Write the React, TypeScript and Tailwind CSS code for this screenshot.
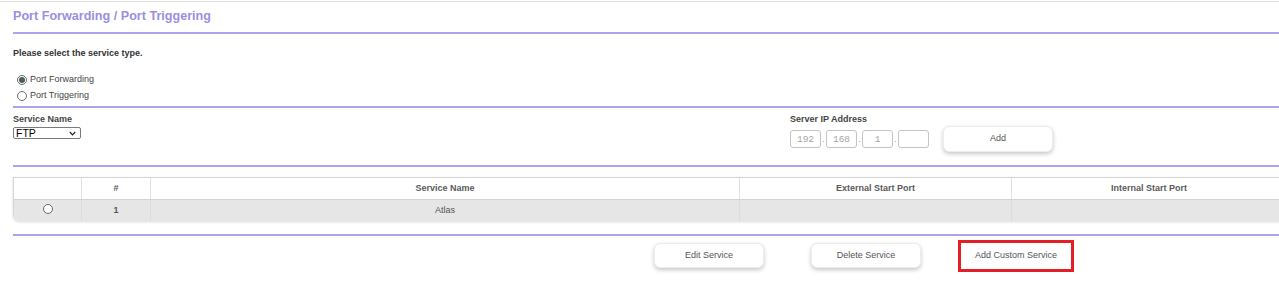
function Radio({ checked }: { checked?: boolean }) {
  return (
    <span className="w-[10px] h-[10px] rounded-full border border-[#6b6b6b] bg-white flex items-center justify-center shrink-0">
      {checked && <span className="w-[6px] h-[6px] rounded-full bg-[#4d5c5c]"></span>}
    </span>
  );
}

function IpBox({ value }: { value: string }) {
  return (
    <input
      readOnly
      value={value}
      className="w-[31px] h-[18px] rounded-[3px] border border-[#c4c4c4] bg-white text-center text-[9.5px] text-[#a5a5a5] font-['Liberation_Mono',monospace] outline-none"
    />
  );
}

function Dot() {
  return <span className="w-[5px] text-[9px] leading-[18px] text-[#999] text-center">.</span>;
}

function PillButton({ label, className = '' }: { label: string; className?: string }) {
  return (
    <button className={`w-[110px] h-[25px] rounded-[6px] bg-white border border-[#ececec] shadow-[0_2px_4px_rgba(0,0,0,0.22)] text-[9px] text-[#555] ${className}`}>
      {label}
    </button>
  );
}

export default function App() {
  return (
    <div className="w-[1279px] h-[289px] overflow-hidden bg-white font-['Liberation_Sans',Arial,sans-serif]">
      <div className="h-px mt-px bg-[#e3e3e3]"></div>
      <div className="pl-[13px]">
        <h1 className="h-[30px] pt-[6px] text-[12.6px] leading-4 font-bold text-[#9a8fe2]">
          Port Forwarding / Port Triggering
        </h1>
        <div className="h-[2px] bg-[#aca3ea]"></div>

        <p className="mt-[14px] text-[9px] leading-[11px] font-bold text-[#333]">Please select the service type.</p>

        <div className="mt-[13px] pl-[4px] text-[9px] text-[#444]">
          <label className="h-4 flex items-center gap-[3px]">
            <Radio checked />
            <span>Port Forwarding</span>
          </label>
          <label className="h-4 flex items-center gap-[3px]">
            <Radio />
            <span>Port Triggering</span>
          </label>
        </div>

        <div className="mt-[2px] h-[2px] bg-[#aca3ea]"></div>

        <div className="mt-[6px] flex">
          <div className="w-[777px]">
            <p className="text-[9px] leading-[11px] font-bold text-[#444]">Service Name</p>
            <div className="mt-[2px] w-[68px] h-[12px] border border-[#7a7a7a] rounded-[2px] flex items-center justify-between pl-[2px] pr-[4px]">
              <span className="text-[10.5px] leading-none text-black">FTP</span>
              <svg width="7" height="5" viewBox="0 0 7 5" fill="none">
                <path d="M0.8 1 L3.5 3.8 L6.2 1" stroke="#222" strokeWidth="1.2" />
              </svg>
            </div>
          </div>
          <div>
            <p className="text-[9px] leading-[11px] font-bold text-[#444]">Server IP Address</p>
            <div className="mt-px flex items-center">
              <IpBox value="192" />
              <Dot />
              <IpBox value="168" />
              <Dot />
              <IpBox value="1" />
              <Dot />
              <IpBox value="" />
              <PillButton label="Add" className="ml-[14px] h-[26px]" />
            </div>
          </div>
        </div>

        <div className="mt-[13px] h-[2px] bg-[#aca3ea]"></div>

        <div className="mt-[10px] w-[1272px] border-t border-l border-[#d6d6d6] rounded-bl-[6px] shadow-[0_1px_3px_rgba(0,0,0,0.15)] overflow-hidden">
          <div className="grid grid-cols-[68px_69px_589px_272px_274px] h-[21px] text-[9px] font-bold text-[#5a5a5a] bg-white">
            <div className="border-r border-[#e0e0e0]"></div>
            <div className="border-r border-[#e0e0e0] flex items-center justify-center">#</div>
            <div className="border-r border-[#e0e0e0] flex items-center justify-center">Service Name</div>
            <div className="border-r border-[#e0e0e0] flex items-center justify-center">External Start Port</div>
            <div className="flex items-center justify-center">Internal Start Port</div>
          </div>
          <div className="grid grid-cols-[68px_69px_589px_272px_274px] h-[22px] text-[9px] text-[#555] bg-[#e6e6e6] border-t border-[#d3d3d3]">
            <div className="border-r border-[#dcdcdc] flex items-center justify-center pb-[3px]">
              <Radio />
            </div>
            <div className="border-r border-[#dcdcdc] flex items-center justify-center font-bold">1</div>
            <div className="border-r border-[#dcdcdc] flex items-center justify-center">Atlas</div>
            <div className="border-r border-[#dcdcdc]"></div>
            <div></div>
          </div>
        </div>

        <div className="mt-[13px] h-[2px] bg-[#aca3ea]"></div>

        <div className="mt-[3px] h-[33px] flex items-center pl-[641px]">
          <PillButton label="Edit Service" />
          <PillButton label="Delete Service" className="ml-[47px]" />
          <div className="ml-[37px] w-[116px] h-[32px] border-[3px] border-[#e41e26] bg-white flex items-center justify-center text-[9px] text-[#555]">
            Add Custom Service
          </div>
        </div>
      </div>
    </div>
  );
}
